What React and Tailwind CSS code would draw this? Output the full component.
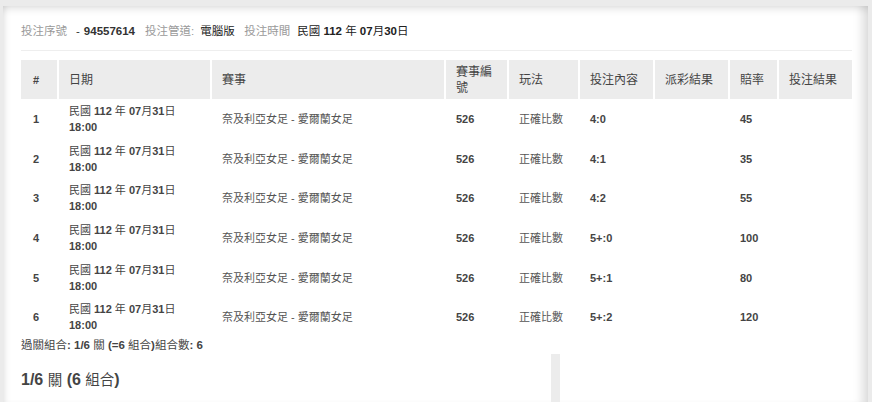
import React from "react";

const FONT = { fontFamily: '"Liberation Sans", Arial, "Noto Sans CJK TC", sans-serif' };

// bold latin/digits, regular CJK (mimics fallback CJK font without bold face)
function Mixed({ text, boldCls = "font-bold", cjkCls = "font-normal" }) {
  const parts = text.split(/([\u3000-\u9fff\uff00-\uffef]+)/).filter((p) => p !== "");
  return (
    <>
      {parts.map((p, i) =>
        /[\u3000-\u9fff\uff00-\uffef]/.test(p) ? (
          <span key={i} className={cjkCls}>{p}</span>
        ) : (
          <span key={i} className={boldCls}>{p}</span>
        )
      )}
    </>
  );
}

const rows = [
  { n: 1, content: "4:0", odds: "45" },
  { n: 2, content: "4:1", odds: "35" },
  { n: 3, content: "4:2", odds: "55" },
  { n: 4, content: "5+:0", odds: "100" },
  { n: 5, content: "5+:1", odds: "80" },
  { n: 6, content: "5+:2", odds: "120" },
];

const headers = ["#", "日期", "賽事", "賽事編號", "玩法", "投注內容", "派彩結果", "賠率", "投注結果"];
const widths = [36, 153, 234, 63, 71, 75, 75, 49, 75];

export default function App() {
  return (
    <div className="h-[402px] overflow-hidden bg-[#ebebeb] pt-[6px] pl-[3px] pr-[4px]" style={FONT}>
      <div className="h-full bg-white pl-[18px] pr-[16px] pt-[16px] shadow-[inset_0_7px_8px_-5px_rgba(0,0,0,0.14),inset_6px_0_6px_-4px_rgba(0,0,0,0.1),inset_-13px_0_10px_-7px_rgba(0,0,0,0.13)]">
        {/* info line */}
        <div className="flex items-center h-[18px] text-[11.5px] leading-[18px] text-[#333]">
          <span className="text-[#9a9a9a]">投注序號</span>
          <span className="ml-[9px]">-</span>
          <span className="ml-[4px] font-bold">94557614</span>
          <span className="ml-[10px] text-[#9a9a9a]">投注管道:</span>
          <span className="ml-[6px] text-[#222]">電腦版</span>
          <span className="ml-[9.5px] text-[#9a9a9a]">投注時間</span>
          <span className="ml-[7px] text-[#222]"><Mixed text="民國 112 年 07月30日" /></span>
        </div>
        <div className="mt-[10px] border-t border-[#eeeeee] w-[831px]" />

        {/* table */}
        <table className="mt-[9px] table-fixed border-separate border-spacing-0 w-[831px] text-[11px]">
          <colgroup>
            {widths.map((w, i) => (
              <col key={i} style={{ width: w }} />
            ))}
          </colgroup>
          <thead>
            <tr className="bg-[#ececec]">
              {headers.map((h, i) => (
                <th
                  key={i}
                  className={
                    i === 0
                      ? "h-[39px] pl-[12px] text-left align-middle font-normal text-[12px] text-[#444] leading-[16px]"
                      : "h-[39px] border-l-2 border-white pl-[10px] pr-[4px] text-left align-middle font-normal text-[12px] text-[#444] leading-[16px]"
                  }
                >
                  {h === "#" ? <span className="font-bold text-[11px]">#</span> : h}
                </th>
              ))}
            </tr>
          </thead>
          <tbody>
            {rows.map((r) => (
              <tr key={r.n}>
                <td className="h-[39.7px] pl-[12px] align-middle font-bold text-[#444] leading-[16px]">{r.n}</td>
                <td className="pl-[12px] align-middle text-[#444] leading-[16px]">
                  <Mixed text="民國 112 年 07月31日" />
                  <br />
                  <span className="font-bold">18:00</span>
                </td>
                <td className="pl-[12px] align-middle text-[#555] leading-[16px]">奈及利亞女足 - 愛爾蘭女足</td>
                <td className="pl-[12px] align-middle font-bold text-[#444] leading-[16px]">526</td>
                <td className="pl-[12px] align-middle text-[#555] leading-[16px]">正確比數</td>
                <td className="pl-[12px] align-middle font-bold text-[#444] leading-[16px]">{r.content}</td>
                <td className="pl-[12px] align-middle leading-[16px]"></td>
                <td className="pl-[12px] align-middle font-bold text-[#444] leading-[16px]">{r.odds}</td>
                <td className="pl-[12px] align-middle leading-[16px]"></td>
              </tr>
            ))}
          </tbody>
        </table>

        <div className="h-[16px] text-[11.5px] leading-[16px] text-[#444]">
          <Mixed text="過關組合: 1/6 關 (=6 組合)組合數: 6" />
        </div>

        <div className="mt-[1px] flex h-[60px]">
          <div className="w-[530px] pt-[15px]">
            <div className="text-[16px] leading-[22px] text-[#444]">
              <Mixed text="1/6 關 (6 組合)" cjkCls="font-normal text-[14.5px]" />
            </div>
          </div>
          <div className="w-[9px] bg-[#ececec]" />
        </div>
      </div>
    </div>
  );
}
